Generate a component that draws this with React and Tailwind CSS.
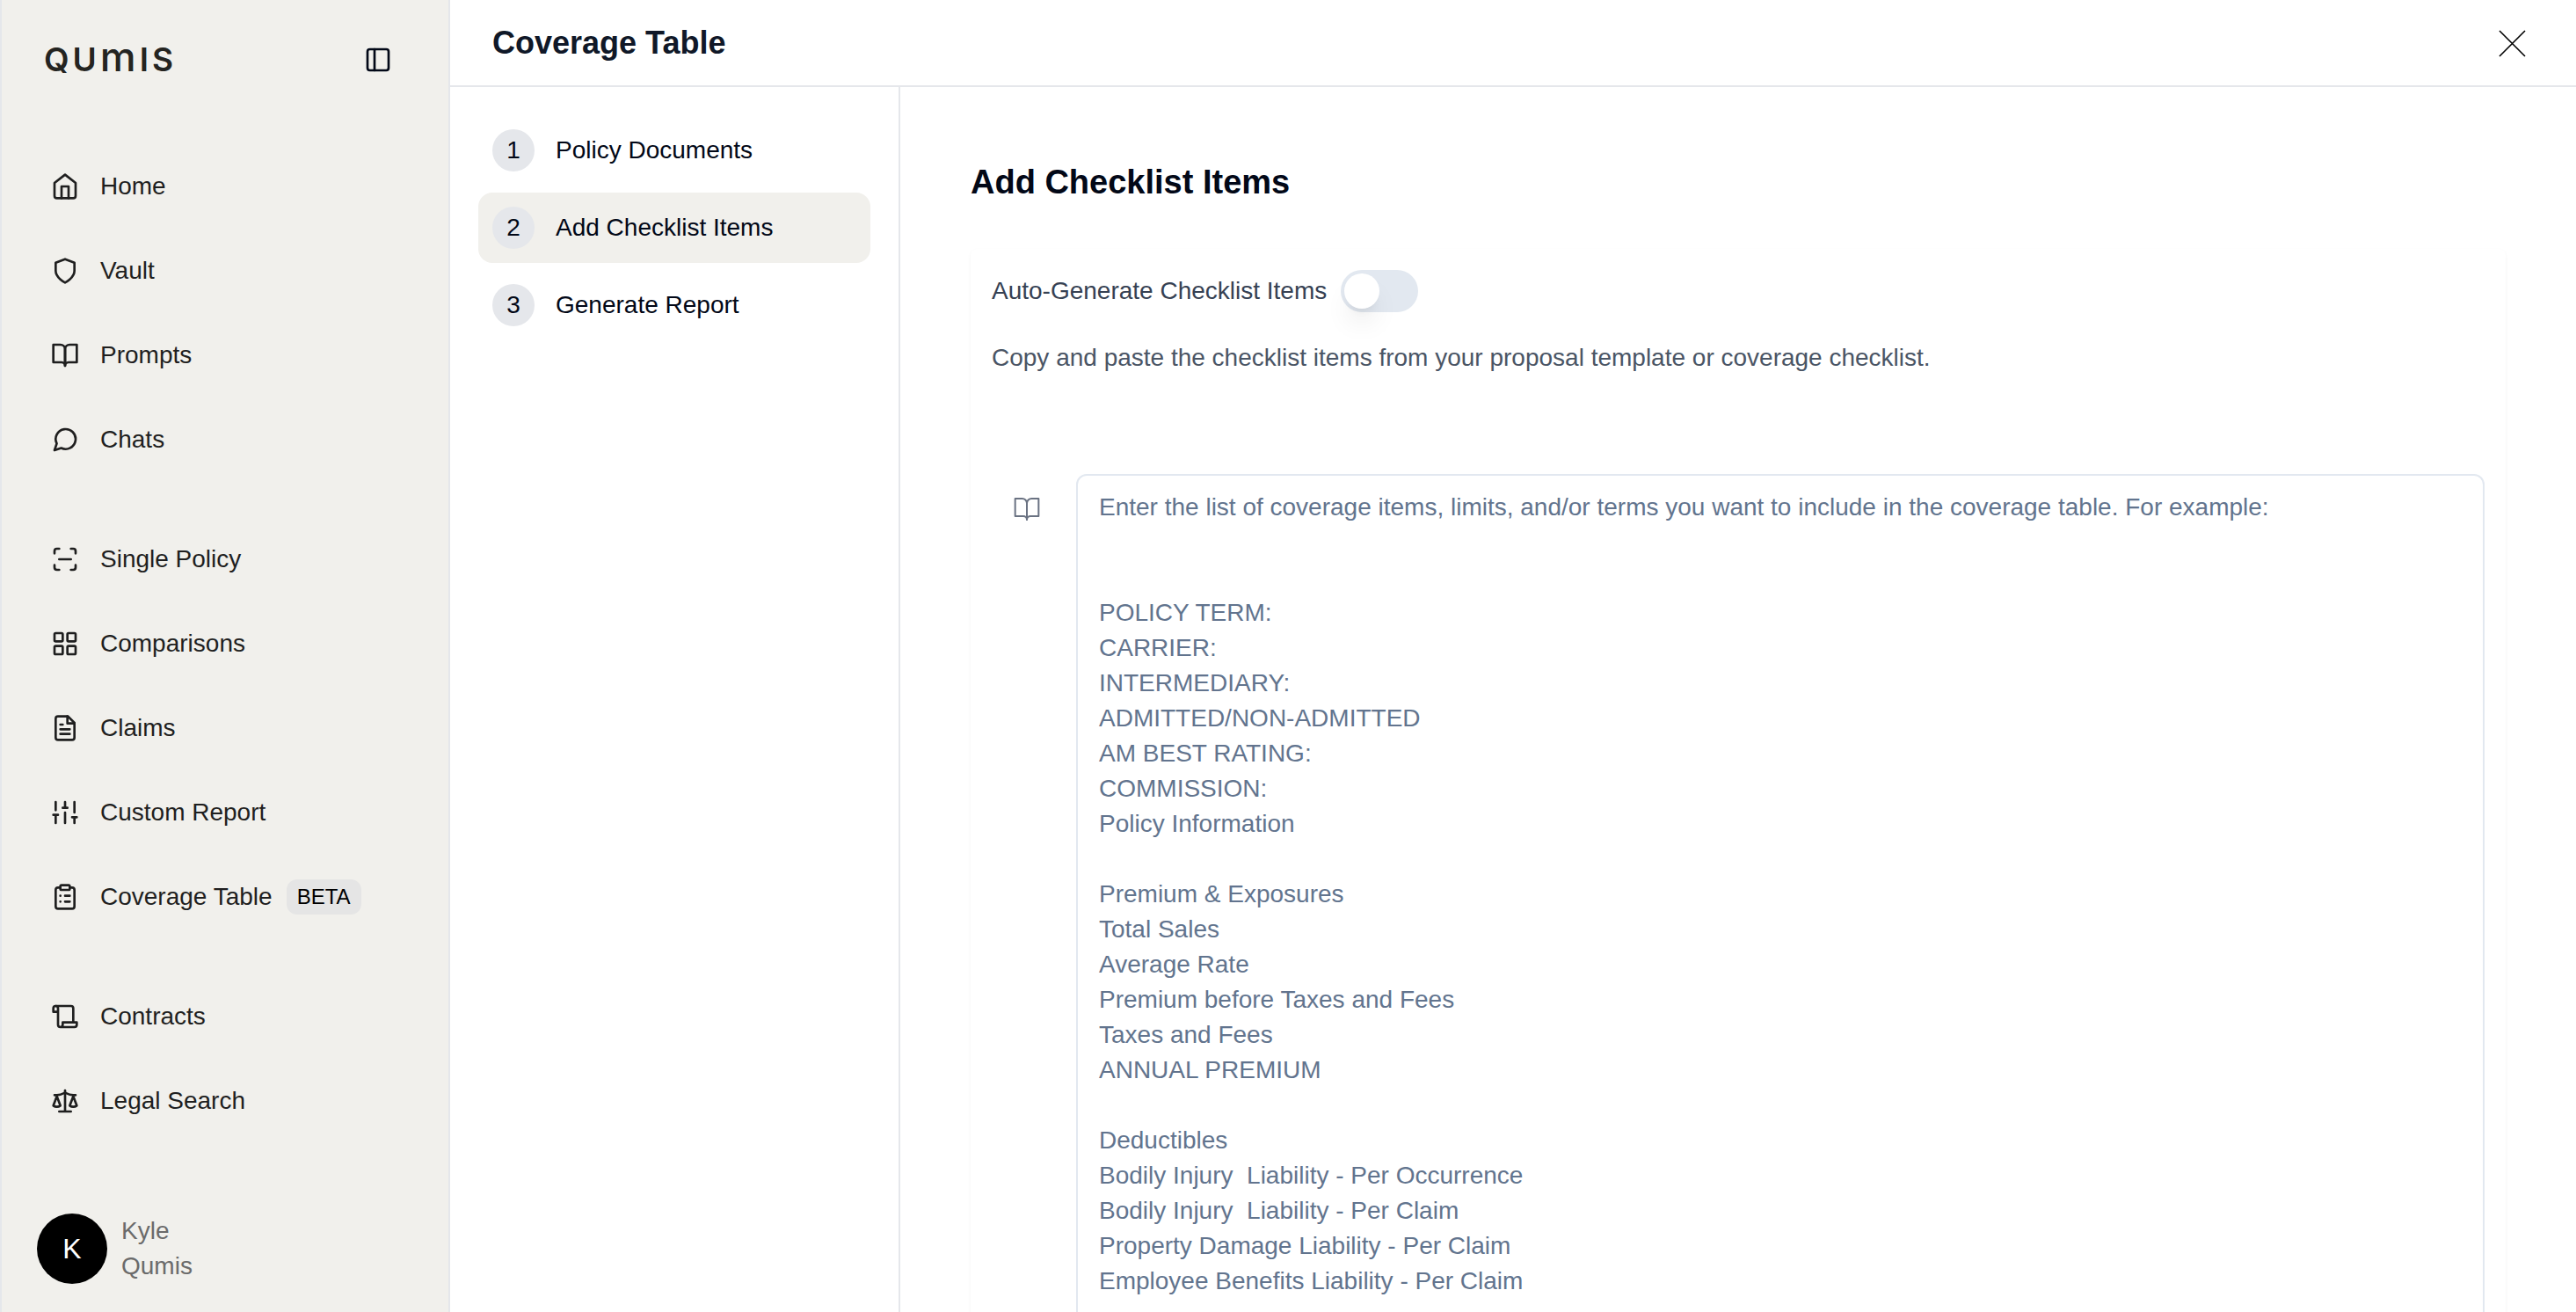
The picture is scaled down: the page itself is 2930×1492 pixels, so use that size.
import { useId, useState } from "react";

function Icon({ children, strokeWidth = 2, className = "" }) {
  return (
    <svg
      viewBox="0 0 24 24"
      fill="none"
      stroke="currentColor"
      strokeWidth={strokeWidth}
      strokeLinecap="round"
      strokeLinejoin="round"
      aria-hidden="true"
      className={`size-8 shrink-0 ${className}`}
    >
      {children}
    </svg>
  );
}

const bookShape = (
  <>
    <path d="M2 3h6a4 4 0 0 1 4 4v14a3 3 0 0 0-3-3H2z" />
    <path d="M22 3h-6a4 4 0 0 0-4 4v14a3 3 0 0 1 3-3h7z" />
  </>
);

const navGroups = [
  [
    {
      label: "Home",
      shape: (
        <>
          <path d="m3 9 9-7 9 7v11a2 2 0 0 1-2 2H5a2 2 0 0 1-2-2z" />
          <polyline points="9 22 9 12 15 12 15 22" />
        </>
      ),
    },
    {
      label: "Vault",
      shape: <path d="M12 22s8-4 8-10V5l-8-3-8 3v7c0 6 8 10 8 10" />,
    },
    { label: "Prompts", shape: bookShape },
    {
      label: "Chats",
      shape: <path d="m3 21 1.9-5.7a8.5 8.5 0 1 1 3.8 3.8z" />,
    },
  ],
  [
    {
      label: "Single Policy",
      shape: (
        <>
          <path d="M3 7V5a2 2 0 0 1 2-2h2" />
          <path d="M17 3h2a2 2 0 0 1 2 2v2" />
          <path d="M21 17v2a2 2 0 0 1-2 2h-2" />
          <path d="M7 21H5a2 2 0 0 1-2-2v-2" />
          <path d="M7 12h10" />
        </>
      ),
    },
    {
      label: "Comparisons",
      shape: (
        <>
          <rect width="7" height="7" x="3" y="3" rx="1" />
          <rect width="7" height="7" x="14" y="3" rx="1" />
          <rect width="7" height="7" x="14" y="14" rx="1" />
          <rect width="7" height="7" x="3" y="14" rx="1" />
        </>
      ),
    },
    {
      label: "Claims",
      shape: (
        <>
          <path d="M14.5 2H6a2 2 0 0 0-2 2v16a2 2 0 0 0 2 2h12a2 2 0 0 0 2-2V7.5L14.5 2z" />
          <polyline points="14 2 14 8 20 8" />
          <path d="M16 13H8M16 17H8M10 9H8" />
        </>
      ),
    },
    {
      label: "Custom Report",
      shape: (
        <path d="M4 21v-7M4 10V3M12 21v-9M12 8V3M20 21v-5M20 12V3M2 14h4M10 8h4M18 16h4" />
      ),
    },
    {
      label: "Coverage Table",
      badge: "BETA",
      shape: (
        <>
          <rect width="8" height="4" x="8" y="2" rx="1" />
          <path d="M16 4h2a2 2 0 0 1 2 2v14a2 2 0 0 1-2 2H6a2 2 0 0 1-2-2V6a2 2 0 0 1 2-2h2" />
          <path d="M12 11h4M12 16h4M8 11h.01M8 16h.01" />
        </>
      ),
    },
  ],
  [
    {
      label: "Contracts",
      shape: (
        <>
          <path d="M8 21h12a2 2 0 0 0 2-2v-2H10v2a2 2 0 1 1-4 0V5a2 2 0 1 0-4 0v3h4" />
          <path d="M19 17V5a2 2 0 0 0-2-2H4" />
        </>
      ),
    },
    {
      label: "Legal Search",
      shape: (
        <>
          <path d="m16 16 3-8 3 8c-.87.65-1.92 1-3 1s-2.13-.35-3-1Z" />
          <path d="m2 16 3-8 3 8c-.87.65-1.92 1-3 1s-2.13-.35-3-1Z" />
          <path d="M7 21h10M12 3v18" />
          <path d="M3 7h2c2 0 5-1 7-2 2 1 5 2 7 2h2" />
        </>
      ),
    },
  ],
];

const steps = ["Policy Documents", "Add Checklist Items", "Generate Report"];

const placeholder = [
  "Enter the list of coverage items, limits, and/or terms you want to include in the coverage table. For example:",
  "",
  "",
  "POLICY TERM:",
  "CARRIER:",
  "INTERMEDIARY:",
  "ADMITTED/NON-ADMITTED",
  "AM BEST RATING:",
  "COMMISSION:",
  "Policy Information",
  "",
  "Premium & Exposures",
  "Total Sales",
  "Average Rate",
  "Premium before Taxes and Fees",
  "Taxes and Fees",
  "ANNUAL PREMIUM",
  "",
  "Deductibles",
  "Bodily Injury  Liability - Per Occurrence",
  "Bodily Injury  Liability - Per Claim",
  "Property Damage Liability - Per Claim",
  "Employee Benefits Liability - Per Claim",
].join("\n");

function Wordmark() {
  return (
    <a
      href="#home"
      aria-label="Qumis"
      className="flex items-baseline gap-1 pb-1 font-[Inter,sans-serif] text-[37px] leading-10 font-semibold text-[#242421]"
    >
      <span>Q</span>
      <span>U</span>
      <span className="text-[46px] leading-10 font-medium">m</span>
      <span>I</span>
      <span>S</span>
    </a>
  );
}

function Sidebar() {
  return (
    <aside className="flex w-[512px] shrink-0 flex-col border-x-2 border-gray-200 bg-[#f1f0ec] px-10 pt-10 pb-8">
      <div className="flex h-14 items-center justify-between pr-6 pl-2">
        <Wordmark />
        <button type="button" aria-label="Collapse sidebar" className="text-[#020817]">
          <Icon>
            <rect width="18" height="18" x="3" y="3" rx="2" />
            <path d="M9 3v18" />
          </Icon>
        </button>
      </div>

      <nav className="mt-19 flex flex-col gap-14">
        {navGroups.map((group, i) => (
          <ul key={i} className="flex flex-col gap-4">
            {group.map((item) => (
              <li key={item.label}>
                <a
                  href="#section"
                  className="flex h-20 items-center px-4 text-[28px] leading-10 text-[#1f1f1f]"
                >
                  <Icon className="mr-6">{item.shape}</Icon>
                  {item.label}
                  {item.badge && (
                    <span className="ml-4 rounded-xl bg-[#e5e5e5] px-3 text-2xl leading-10 text-black">
                      {item.badge}
                    </span>
                  )}
                </a>
              </li>
            ))}
          </ul>
        ))}
      </nav>

      <button type="button" className="mt-auto flex items-center gap-4 text-left">
        <span className="flex size-20 items-center justify-center rounded-full bg-black text-[32px] font-medium text-white">
          K
        </span>
        <span className="flex flex-col text-[28px] leading-10 text-[#6b6b6b]">
          <span>Kyle</span>
          <span>Qumis</span>
        </span>
      </button>
    </aside>
  );
}

function Steps() {
  return (
    <ol className="flex w-[512px] shrink-0 flex-col gap-2 border-r-2 border-gray-200 p-8">
      {steps.map((label, i) => (
        <li key={label}>
          <button
            type="button"
            aria-current={i === 1 ? "step" : undefined}
            className="flex h-20 w-full items-center gap-6 rounded-2xl px-4 text-[28px] leading-10 text-[#020817] aria-[current=step]:bg-[#f1f0ec]"
          >
            <span className="flex size-12 items-center justify-center rounded-full bg-gray-200">
              {i + 1}
            </span>
            {label}
          </button>
        </li>
      ))}
    </ol>
  );
}

function ChecklistForm() {
  const [auto, setAuto] = useState(false);
  const switchId = useId();
  const headingId = useId();
  return (
    <section className="min-w-0 flex-1 overflow-y-auto p-20 [scrollbar-width:none]">
      <h2 id={headingId} className="mb-12 text-[38px] leading-14 font-bold text-[#020817]">
        Add Checklist Items
      </h2>
      <div className="rounded-lg bg-white p-6 shadow-[0_2px_4px_rgba(0,0,0,0.05)]">
        <div className="flex items-center gap-4">
          <label htmlFor={switchId} className="text-[28px] leading-10 text-gray-700">
            Auto-Generate Checklist Items
          </label>
          <input
            id={switchId}
            type="checkbox"
            role="switch"
            checked={auto}
            onChange={(e) => setAuto(e.target.checked)}
            className="h-12 w-22 cursor-pointer appearance-none rounded-full bg-slate-200 p-1 before:block before:size-10 before:rounded-full before:bg-white before:shadow-[0_20px_30px_-6px_rgba(0,0,0,0.1),0_8px_12px_-8px_rgba(0,0,0,0.1)] checked:bg-slate-900 checked:before:ml-10"
          />
        </div>
        <p className="mt-8 text-[28px] leading-10 text-gray-600">
          Copy and paste the checklist items from your proposal template or coverage checklist.
        </p>
        <div className="mt-28 flex items-start gap-4">
          <button type="button" aria-label="Open prompt library" className="p-6 text-gray-500">
            <Icon strokeWidth={1.5}>{bookShape}</Icon>
          </button>
          <textarea
            aria-labelledby={headingId}
            rows={30}
            placeholder={placeholder}
            className="min-w-0 flex-1 resize-none rounded-xl border-2 border-slate-200 bg-white px-6 py-4 text-[28px] leading-10 text-slate-900 placeholder:text-slate-500"
          />
        </div>
      </div>
    </section>
  );
}

export default function App() {
  return (
    <div className="flex h-screen overflow-hidden bg-white font-['Liberation_Sans',Arial,sans-serif]">
      <Sidebar />
      <main className="flex min-w-0 flex-1 flex-col">
        <header className="flex h-[99px] shrink-0 items-center justify-between border-b-2 border-gray-200 pr-14 pl-12">
          <h1 className="text-4xl leading-14 font-bold text-gray-900">Coverage Table</h1>
          <button type="button" aria-label="Close" className="text-black">
            <svg
              viewBox="0 0 32 32"
              fill="none"
              stroke="currentColor"
              strokeWidth="1.6"
              aria-hidden="true"
              className="size-8"
            >
              <path d="M1 2l29 29M30 2L1 31" />
            </svg>
          </button>
        </header>
        <div className="flex min-h-0 flex-1">
          <Steps />
          <ChecklistForm />
        </div>
      </main>
    </div>
  );
}
